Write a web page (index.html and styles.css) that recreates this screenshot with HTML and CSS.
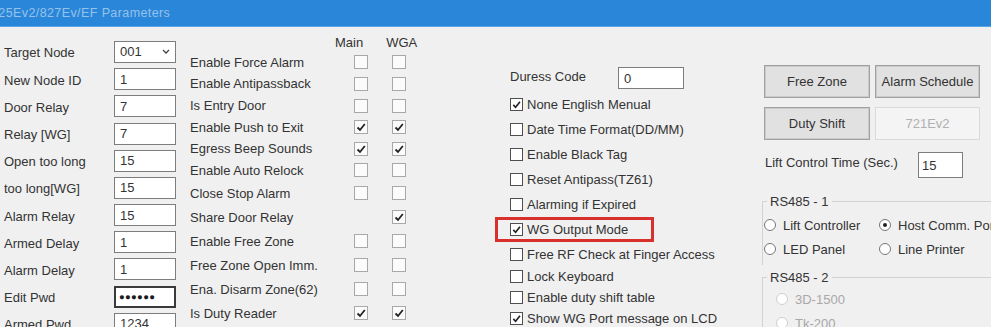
FILE: index.html
```html
<!DOCTYPE html>
<html>
<head>
<meta charset="utf-8">
<link rel="stylesheet" href="styles.css">
</head>
<body>
<div class="titlebar"><span class="title">725Ev2/827Ev/EF Parameters</span></div>
<div class="main">
  <div class="col1">
    <div class="field"><span class="lbl">Target Node</span><div class="select"><span>001</span><svg class="chev" width="8" height="5" viewBox="0 0 8 5"><path d="M1 1 L4 4 L7 1" fill="none" stroke="#444" stroke-width="1.3"/></svg></div></div>
    <div class="field"><span class="lbl">New Node ID</span><div class="input">1</div></div>
    <div class="field"><span class="lbl">Door Relay</span><div class="input">7</div></div>
    <div class="field"><span class="lbl">Relay [WG]</span><div class="input">7</div></div>
    <div class="field"><span class="lbl">Open too long</span><div class="input">15</div></div>
    <div class="field"><span class="lbl">too long[WG]</span><div class="input">15</div></div>
    <div class="field"><span class="lbl">Alarm Relay</span><div class="input">15</div></div>
    <div class="field"><span class="lbl">Armed Delay</span><div class="input">1</div></div>
    <div class="field"><span class="lbl">Alarm Delay</span><div class="input">1</div></div>
    <div class="field"><span class="lbl">Edit Pwd</span><div class="input pwd">●●●●●●</div></div>
    <div class="field"><span class="lbl">Armed Pwd</span><div class="input">1234</div></div>
  </div>

  <div class="col2">
    <div class="hdr"><span>Main</span><span>WGA</span></div>
    <div class="grp g1">
      <div class="row"><span>Enable Force Alarm</span><span class="cb"></span><span class="cb"></span></div>
      <div class="row"><span>Enable Antipassback</span><span class="cb"></span><span class="cb"></span></div>
      <div class="row"><span>Is Entry Door</span><span class="cb"></span><span class="cb"></span></div>
      <div class="row"><span>Enable Push to Exit</span><span class="cb"><svg viewBox="0 0 12 12" width="12" height="12"><path d="M2.5 6.5 L5 9 L9.8 3" fill="none" stroke="#222" stroke-width="1.8"/></svg></span><span class="cb"><svg viewBox="0 0 12 12" width="12" height="12"><path d="M2.5 6.5 L5 9 L9.8 3" fill="none" stroke="#222" stroke-width="1.8"/></svg></span></div>
      <div class="row"><span>Egress Beep Sounds</span><span class="cb"><svg viewBox="0 0 12 12" width="12" height="12"><path d="M2.5 6.5 L5 9 L9.8 3" fill="none" stroke="#222" stroke-width="1.8"/></svg></span><span class="cb"><svg viewBox="0 0 12 12" width="12" height="12"><path d="M2.5 6.5 L5 9 L9.8 3" fill="none" stroke="#222" stroke-width="1.8"/></svg></span></div>
      <div class="row"><span>Enable Auto Relock</span><span class="cb"></span><span class="cb"></span></div>
    </div>
    <div class="grp g2">
      <div class="row"><span>Close Stop Alarm</span><span class="cb"></span><span class="cb"></span></div>
      <div class="row"><span>Share Door Relay</span><span></span><span class="cb"><svg viewBox="0 0 12 12" width="12" height="12"><path d="M2.5 6.5 L5 9 L9.8 3" fill="none" stroke="#222" stroke-width="1.8"/></svg></span></div>
      <div class="row"><span>Enable Free Zone</span><span class="cb"></span><span class="cb"></span></div>
      <div class="row"><span>Free Zone Open Imm.</span><span class="cb"></span><span class="cb"></span></div>
      <div class="row"><span>Ena. Disarm Zone(62)</span><span class="cb"></span><span class="cb"></span></div>
      <div class="row"><span>Is Duty Reader</span><span class="cb"><svg viewBox="0 0 12 12" width="12" height="12"><path d="M2.5 6.5 L5 9 L9.8 3" fill="none" stroke="#222" stroke-width="1.8"/></svg></span><span class="cb"><svg viewBox="0 0 12 12" width="12" height="12"><path d="M2.5 6.5 L5 9 L9.8 3" fill="none" stroke="#222" stroke-width="1.8"/></svg></span></div>
    </div>
  </div>

  <div class="col3">
    <div class="duress"><span class="dlbl">Duress Code</span><div class="input dinput">0</div></div>
    <div class="opts">
      <div class="opt"><span class="cb dark"><svg viewBox="0 0 12 12" width="11" height="11"><path d="M2.5 6.5 L5 9 L9.8 3" fill="none" stroke="#222" stroke-width="1.8"/></svg></span><span>None English Menual</span></div>
      <div class="opt"><span class="cb dark"></span><span>Date Time Format(DD/MM)</span></div>
      <div class="opt"><span class="cb dark"></span><span>Enable Black Tag</span></div>
      <div class="opt"><span class="cb dark"></span><span>Reset Antipass(TZ61)</span></div>
      <div class="opt"><span class="cb dark"></span><span>Alarming if Expired</span></div>
      <div class="opt hl"><span class="cb dark"><svg viewBox="0 0 12 12" width="11" height="11"><path d="M2.5 6.5 L5 9 L9.8 3" fill="none" stroke="#222" stroke-width="1.8"/></svg></span><span>WG Output Mode</span></div>
      <div class="opt"><span class="cb dark"></span><span>Free RF Check at Finger Access</span></div>
    </div>
    <div class="opts compact">
      <div class="opt"><span class="cb dark"></span><span>Lock Keyboard</span></div>
      <div class="opt"><span class="cb dark"></span><span>Enable duty shift table</span></div>
      <div class="opt"><span class="cb dark"><svg viewBox="0 0 12 12" width="11" height="11"><path d="M2.5 6.5 L5 9 L9.8 3" fill="none" stroke="#222" stroke-width="1.8"/></svg></span><span>Show WG Port message on LCD</span></div>
    </div>
  </div>

  <div class="col4">
    <div class="btns">
      <div class="btn">Free Zone</div>
      <div class="btn">Alarm Schedule</div>
      <div class="btn">Duty Shift</div>
      <div class="btn dis">721Ev2</div>
    </div>
    <div class="lift"><span class="liftlbl">Lift Control Time (Sec.)</span><div class="input liftinput">15</div></div>
    <fieldset class="grpbox">
      <legend>RS485 - 1</legend>
      <div class="radios">
        <div class="ritem"><span class="rad"></span><span>Lift Controller</span></div>
        <div class="ritem"><span class="rad on"></span><span>Host Comm. Port</span></div>
        <div class="ritem"><span class="rad"></span><span>LED Panel</span></div>
        <div class="ritem"><span class="rad"></span><span>Line Printer</span></div>
      </div>
    </fieldset>
    <fieldset class="grpbox second">
      <legend>RS485 - 2</legend>
      <div class="radios single">
        <div class="ritem disabled"><span class="rad"></span><span>3D-1500</span></div>
        <div class="ritem disabled"><span class="rad"></span><span>Tk-200</span></div>
      </div>
    </fieldset>
  </div>
</div>
</body>
</html>
```

FILE: styles.css
```css
html, body {
  margin: 0;
  padding: 0;
  width: 991px;
  height: 327px;
  overflow: hidden;
}
body {
  background: #f0f0f0;
  font: 13px "Liberation Sans", Arial, sans-serif;
  color: #333;
}
.titlebar {
  height: 27px;
  background: #2a86d8;
  color: rgba(255, 255, 255, 0.5);
  font-size: 12.5px;
  line-height: 27px;
  white-space: nowrap;
  overflow: hidden;
  border-bottom: 1px solid #5aa3e4;
  box-sizing: border-box;
}
.title {
  display: block;
  margin-left: -9px;
  letter-spacing: 0.4px;
}
.main {
  display: flex;
}

/* column 1 */
.col1 {
  flex: none;
  width: 186px;
  padding: 11.4px 0 0 4px;
}
.field {
  display: flex;
  align-items: center;
  height: 27.2px;
}
.lbl {
  width: 110px;
  padding-top: 2px;
}
.input, .select {
  width: 62px;
  height: 22px;
  box-sizing: border-box;
  border: 1px solid #7d7d7d;
  background: #fff;
  padding-left: 5px;
  display: flex;
  align-items: center;
  color: #333;
}
.chev {
  margin-left: auto;
  margin-right: 5px;
}
.pwd {
  border: 2px solid #3a3a3a;
  padding-left: 3px;
  font-size: 9.5px;
  letter-spacing: 0.3px;
  color: #1a1a1a;
}

/* column 2 */
.col2 {
  flex: none;
  width: 305px;
  padding-top: 6px;
}
.hdr {
  display: flex;
  gap: 23px;
  padding-left: 145px;
  height: 18.6px;
  align-items: center;
}
.row {
  display: grid;
  grid-template-columns: 164px 38px 40px;
  align-items: center;
}
.g1 .row { height: 21.6px; }
.g2 .row { height: 24px; }
.cb {
  width: 14px;
  height: 14px;
  box-sizing: border-box;
  border: 1px solid #a8a8a8;
  background: #fbfbfb;
  display: flex;
  align-items: center;
  justify-content: center;
}

/* column 3 */
.col3 {
  flex: none;
  width: 267px;
  padding-top: 38px;
}
.duress {
  display: flex;
  align-items: center;
  height: 26.5px;
  padding-left: 15px;
}
.dlbl {
  width: 108px;
  margin-top: -4px;
}
.dinput {
  width: 66px;
}
.opt {
  display: flex;
  align-items: center;
  gap: 4px;
  height: 25px;
  padding-left: 15px;
  box-sizing: border-box;
}
.compact .opt {
  height: 20.7px;
}
.cb.dark {
  width: 13px;
  height: 13px;
  border-color: #4f4f4f;
  background: #fff;
}
.opt.hl {
  width: 159px;
  box-shadow: inset 0 0 0 3px #d8302c;
}

/* column 4 */
.col4 {
  flex: none;
  width: 300px;
  padding-top: 38px;
}
.btns {
  display: grid;
  grid-template-columns: 106px 105px;
  gap: 9px 5px;
  padding-left: 2px;
}
.btn {
  height: 33px;
  box-sizing: border-box;
  display: flex;
  align-items: center;
  justify-content: center;
  background: #e1e1e1;
  border: 1px solid #a0a0a0;
  box-shadow: inset 0 0 0 1px #cbcbcb;
}
.btn.dis {
  background: #f4f4f4;
  border-color: #dadada;
  box-shadow: none;
  color: #b0b0b0;
}
.lift {
  display: flex;
  align-items: center;
  height: 26px;
  margin-top: 12px;
  padding-left: 3px;
}
.liftlbl {
  width: 153px;
  margin-top: -5px;
}
.liftinput {
  width: 45px;
  height: 26px;
  padding-left: 3px;
}
.grpbox {
  margin: 16px 0 0;
  padding: 4px 0 4px 0;
  border: 1px solid #d2d2d2;
  border-right: none;
  border-bottom: none;
  min-width: 0;
}
.grpbox.second {
  margin-top: 5px;
  padding-top: 2px;
}
.grpbox legend {
  padding: 0 3px;
  margin-left: 4px;
  line-height: 15px;
}
.radios {
  display: grid;
  grid-template-columns: 115px auto;
  grid-auto-rows: 24px;
  padding-left: 1px;
  white-space: nowrap;
}
.radios.single {
  grid-template-columns: auto;
  padding-left: 13px;
}
.ritem {
  display: flex;
  align-items: center;
  gap: 7px;
}
.rad {
  width: 12px;
  height: 12px;
  border-radius: 50%;
  border: 1px solid #777;
  background: #fff;
  box-sizing: border-box;
  display: flex;
  align-items: center;
  justify-content: center;
}
.rad.on::after {
  content: "";
  width: 4px;
  height: 4px;
  border-radius: 50%;
  background: #222;
}
.ritem.disabled {
  color: #a8a8a8;
}
.ritem.disabled .rad {
  border-color: #cfcfcf;
}
```
